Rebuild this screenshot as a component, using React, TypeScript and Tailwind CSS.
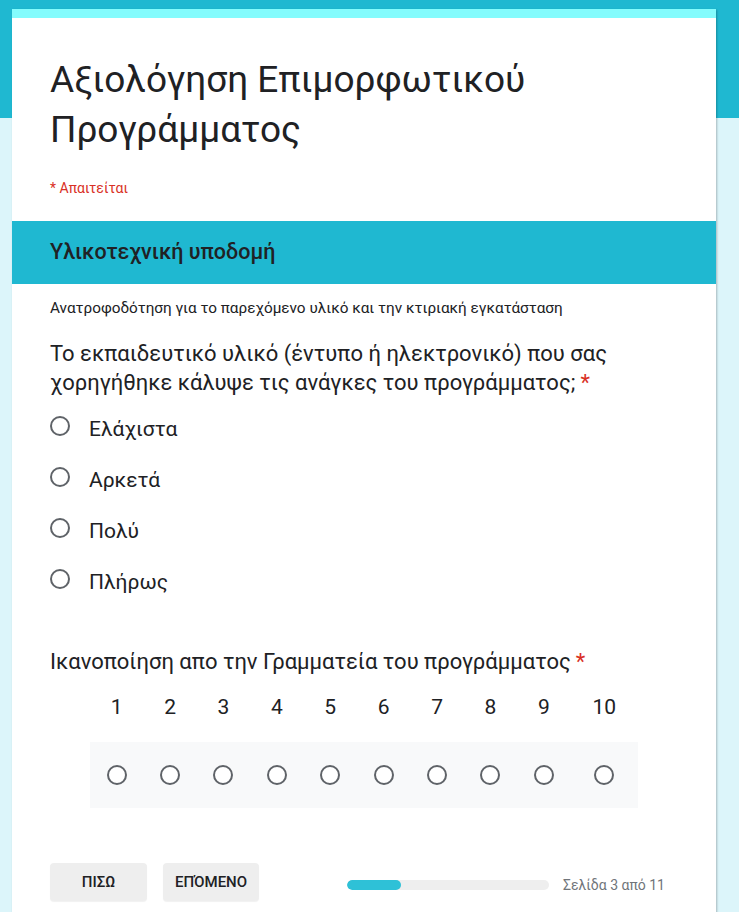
import React from 'react';

const options = ['Ελάχιστα', 'Αρκετά', 'Πολύ', 'Πλήρως'];
const scale = [1, 2, 3, 4, 5, 6, 7, 8, 9, 10];

const Radio = () => (
  <div className="w-5 h-5 rounded-full border-2 border-[#5f6368] bg-white shrink-0" />
);

const Asterisk = () => <span className="text-[#d93025] ml-[5px]">*</span>;

const App = () => {
  return (
    <div
      className="min-h-[912px] w-full overflow-hidden bg-[linear-gradient(to_bottom,#1fb8d1_118px,#dcf5fa_118px)] pt-[9px]"
      style={{ fontFamily: 'Roboto, "Noto Sans", sans-serif' }}
    >
      <div className="ml-[12px] w-[704px] bg-white border-t-[9px] border-[#84fcfd] shadow-[1px_1px_2px_rgba(0,0,0,0.25)] pb-[40px]">
        {/* form header */}
        <div className="px-[38px] pt-[37px] pb-[23px]">
          <h1 className="text-[37px] leading-[50px] text-[#202124] font-normal">
            Αξιολόγηση Επιμορφωτικού Προγράμματος
          </h1>
          <div className="mt-[23px] text-[14px] leading-[20px] text-[#d93025]">* Απαιτείται</div>
        </div>

        {/* section band */}
        <div className="h-[63px] bg-[#1fb8d1] px-[38px] flex items-center">
          <h2 className="text-[21.5px] font-medium text-[#202124]">Υλικοτεχνική υποδομή</h2>
        </div>

        <div className="px-[38px]">
          <p className="mt-[14px] text-[15.3px] leading-[20px] text-[#202124]">
            Ανατροφοδότηση για το παρεχόμενο υλικό και την κτιριακή εγκατάσταση
          </p>

          <div className="mt-[21px] text-[22px] leading-[29px] text-[#202124] pr-[40px]">
            Το εκπαιδευτικό υλικό (έντυπο ή ηλεκτρονικό) που σας χορηγήθηκε κάλυψε τις ανάγκες του
            προγράμματος;<Asterisk />
          </div>

          <div className="mt-[5px] flex flex-col">
            {options.map((o) => (
              <div key={o} className="h-[51px] flex items-center gap-[19px]">
                <div className="-mt-[4px]">
                  <Radio />
                </div>
                <span className="text-[21px] text-[#202124] pt-[4px]">{o}</span>
              </div>
            ))}
          </div>

          <div className="mt-[42px] text-[22px] leading-[28px] text-[#202124]">
            Ικανοποίηση απο την Γραμματεία του προγράμματος<Asterisk />
          </div>

          <div className="ml-[40px] w-[548px] mt-[19px]">
            <div className="flex h-[26px] items-center">
              {scale.map((n) => (
                <div
                  key={n}
                  className={`${n === 10 ? 'flex-1' : 'w-[53.4px]'} text-center text-[21px] text-[#202124]`}
                >
                  {n}
                </div>
              ))}
            </div>
            <div className="mt-[21px] h-[66px] bg-[#f8f9fa] flex items-center">
              {scale.map((n) => (
                <div
                  key={n}
                  className={`${n === 10 ? 'flex-1' : 'w-[53.4px]'} flex justify-center`}
                >
                  <Radio />
                </div>
              ))}
            </div>
          </div>

          {/* navigation */}
          <div className="mt-[55px] flex items-center">
            <button className="w-[97px] h-[38px] rounded-[4px] bg-[#eeeeee] text-[15px] font-medium text-[#202124] shadow-[0_1px_1px_rgba(0,0,0,0.06)]">
              ΠΙΣΩ
            </button>
            <button className="ml-[16px] w-[96px] h-[38px] rounded-[4px] bg-[#eeeeee] text-[15px] font-medium text-[#202124] shadow-[0_1px_1px_rgba(0,0,0,0.06)]">
              ΕΠΌΜΕΝΟ
            </button>
            <div className="ml-[88px] mt-[6px] w-[202px] h-[10px] rounded-full bg-[#eeeeee] overflow-hidden">
              <div className="h-full w-[54px] rounded-full bg-[#2ec1d7]" />
            </div>
            <span className="ml-[14px] mt-[6px] text-[14px] text-[#70757a]">Σελίδα 3 από 11</span>
          </div>
        </div>
      </div>
    </div>
  );
};

export default App;
